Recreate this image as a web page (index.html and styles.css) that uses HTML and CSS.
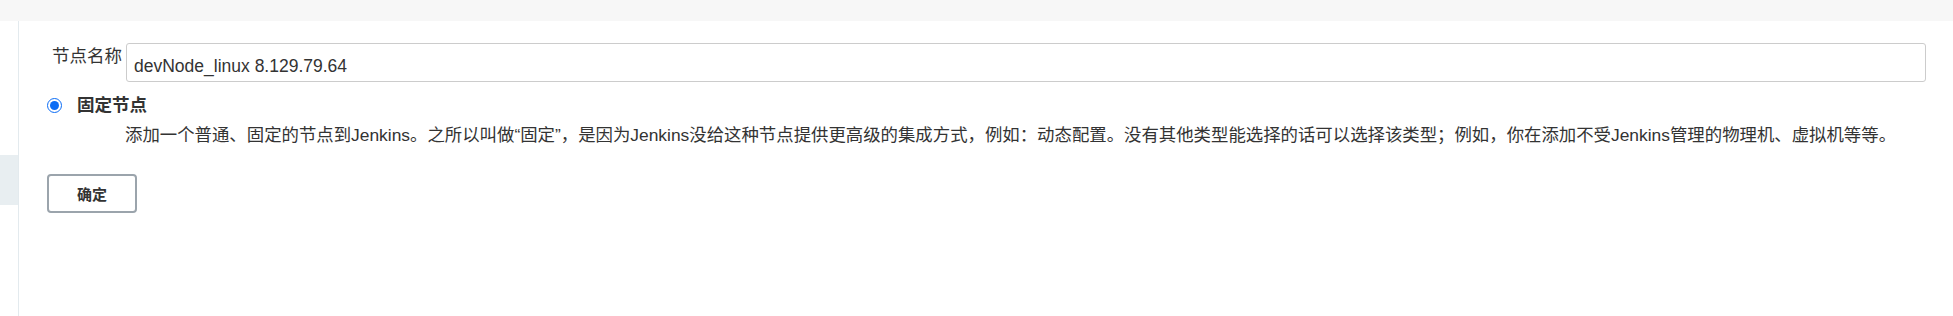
FILE: index.html
```html
<!DOCTYPE html>
<html lang="zh-CN">
<head>
<meta charset="utf-8">
<title>新建节点</title>
<link rel="stylesheet" href="styles.css">
</head>
<body>
<div class="topbar"></div>
<div class="layout">
  <aside class="side">
    <div class="side-item"></div>
  </aside>
  <main class="main">
    <div class="field">
      <label class="field-label" for="name">节点名称</label>
      <input class="field-input" id="name" type="text" value="devNode_linux 8.129.79.64">
    </div>
    <div class="option">
      <label class="radio-row">
        <input class="radio" type="radio" name="mode" checked>
        <span class="radio-title">固定节点</span>
      </label>
      <div class="radio-desc">添加一个普通、固定的节点到Jenkins。之所以叫做“固定”，是因为Jenkins没给这种节点提供更高级的集成方式，例如：动态配置。没有其他类型能选择的话可以选择该类型；例如，你在添加不受Jenkins管理的物理机、虚拟机等等。</div>
    </div>
    <button class="ok" type="button">确定</button>
  </main>
</div>
</body>
</html>
```
FILE: styles.css
```css
html, body {
  margin: 0;
  padding: 0;
  background: #ffffff;
}
body {
  font-family: "Liberation Sans", "Noto Sans CJK SC", sans-serif;
  color: #333333;
  height: 316px;
  overflow: hidden;
}
.topbar {
  height: 21px;
  background: #f7f7f7;
}
.layout {
  display: flex;
  height: 295px;
}
.side {
  width: 18px;
  flex: none;
  border-right: 1px solid #e3eaee;
}
.side-item {
  margin-top: 134px;
  height: 50px;
  background: #e8eef1;
}
.main {
  flex: 1;
  padding: 22px 27px 0 28px;
}
.field {
  display: flex;
  align-items: flex-start;
}
.field-label {
  flex: none;
  width: 79px;
  box-sizing: border-box;
  padding-left: 5px;
  margin-top: 2px;
  font-size: 17.5px;
  line-height: 22px;
  white-space: nowrap;
}
.field-input {
  flex: 1;
  min-width: 0;
  height: 39px;
  box-sizing: border-box;
  margin: 0;
  border: 1px solid #cccccc;
  border-radius: 3px;
  padding: 11px 8px 4px 7px;
  font-family: "Liberation Sans", "Noto Sans CJK SC", sans-serif;
  font-size: 17.5px;
  line-height: 22px;
  color: #333333;
  outline: none;
}
.radio-row {
  display: flex;
  align-items: center;
  height: 22px;
  margin-top: 12px;
}
.radio {
  width: 15px;
  height: 15px;
  margin: 0 15px 0 0;
  accent-color: #0b6cf5;
}
.radio-title {
  font-size: 17.5px;
  font-weight: bold;
  line-height: 22px;
}
.radio-desc {
  margin-top: 8px;
  padding-left: 78px;
  font-size: 17.4px;
  line-height: 22px;
  white-space: nowrap;
}
.ok {
  display: block;
  margin-top: 28px;
  width: 90px;
  height: 39px;
  box-sizing: border-box;
  border: 2px solid #9ba4ac;
  border-radius: 4px;
  background: #ffffff;
  font-family: "Liberation Sans", "Noto Sans CJK SC", sans-serif;
  font-size: 15px;
  font-weight: 600;
  color: #333333;
  padding: 0;
}
```
